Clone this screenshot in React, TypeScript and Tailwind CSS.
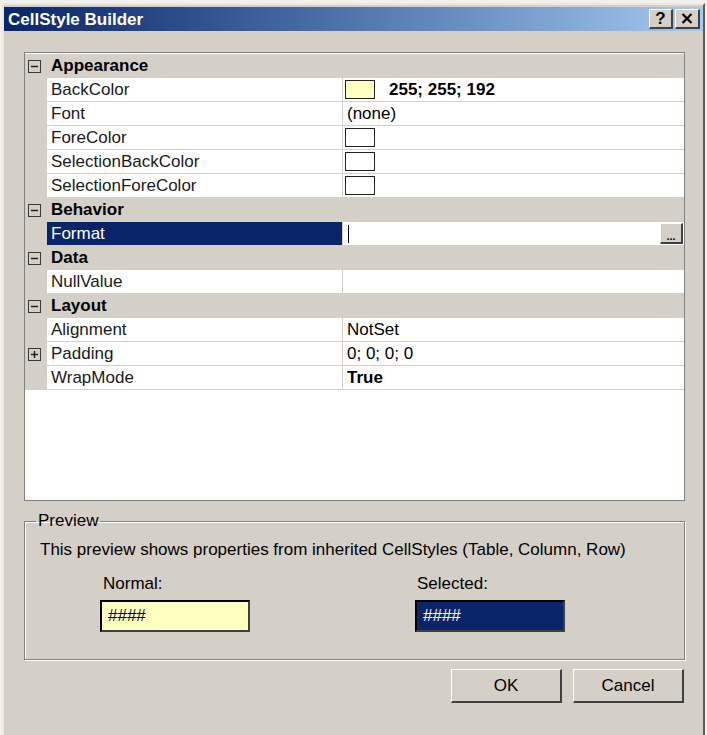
import React from "react";

type Prop = {
  name: string;
  value?: React.ReactNode;
  expand?: boolean;
  selected?: boolean;
};

type Category = { title: string; props: Prop[] };

function Glyph({ plus }: { plus?: boolean }) {
  return (
    <svg width="13" height="13" viewBox="0 0 13 13" className="block">
      <rect x="0.5" y="0.5" width="12" height="12" fill="none" stroke="#3a3a3a" />
      <line x1="3" y1="6.5" x2="10" y2="6.5" stroke="#1a1a1a" strokeWidth="1.4" />
      {plus && <line x1="6.5" y1="3" x2="6.5" y2="10" stroke="#1a1a1a" strokeWidth="1.4" />}
    </svg>
  );
}

function Swatch({ color }: { color: string }) {
  return <div className={`w-[30px] h-[19px] border border-[#222] ${color}`} />;
}

const categories: Category[] = [
  {
    title: "Appearance",
    props: [
      {
        name: "BackColor",
        value: (
          <div className="flex items-center gap-[14px]">
            <Swatch color="bg-[#ffffc0]" />
            <span className="font-bold">255; 255; 192</span>
          </div>
        ),
      },
      { name: "Font", value: <span className="pl-[2px]">(none)</span> },
      { name: "ForeColor", value: <Swatch color="bg-white" /> },
      { name: "SelectionBackColor", value: <Swatch color="bg-white" /> },
      { name: "SelectionForeColor", value: <Swatch color="bg-white" /> },
    ],
  },
  {
    title: "Behavior",
    props: [{ name: "Format", selected: true }],
  },
  {
    title: "Data",
    props: [{ name: "NullValue" }],
  },
  {
    title: "Layout",
    props: [
      { name: "Alignment", value: <span className="pl-[2px]">NotSet</span> },
      { name: "Padding", expand: true, value: <span className="pl-[2px]">0; 0; 0; 0</span> },
      { name: "WrapMode", value: <span className="pl-[2px] font-bold">True</span> },
    ],
  },
];

function PropRow({ p }: { p: Prop }) {
  return (
    <div className="flex h-[24px]">
      <div className="w-[22px] shrink-0 bg-[#d4d0c8] flex items-center pl-[3px]">
        {p.expand && <Glyph plus />}
      </div>
      <div
        className={`w-[296px] shrink-0 border-r border-b border-[#d4d0c8] pl-[4px] flex items-center ${
          p.selected ? "bg-[#0a246a] text-white" : "bg-white text-[#1a1a1a]"
        }`}
      >
        {p.name}
      </div>
      <div className="flex-1 border-b border-[#d4d0c8] pl-[2px] flex items-center">
        {p.selected ? (
          <div className="flex items-center w-full h-full">
            <div className="ml-[3px] w-[1px] h-[18px] bg-black" />
            <div className="ml-auto mr-[1px] w-[23px] h-[21px] bg-[#d4d0c8] border-t border-l border-white border-r-2 border-b-2 border-r-[#404040] border-b-[#404040] flex items-end justify-center pb-[1px]">
              <span className="text-[11px] leading-[10px] font-bold">...</span>
            </div>
          </div>
        ) : (
          p.value
        )}
      </div>
    </div>
  );
}

function Button({ label }: { label: string }) {
  return (
    <div className="w-[111px] h-[34px] bg-[#d4d0c8] border-t border-l border-white border-r-2 border-b-2 border-r-[#404040] border-b-[#404040] flex items-center justify-center text-black">
      {label}
    </div>
  );
}

export default function App() {
  return (
    <div className="w-[707px] h-[735px] overflow-hidden bg-[#f2f1ec] pl-[2px] pt-[3px] font-['Liberation_Sans',Arial,sans-serif] text-[17px] text-black">
      <div className="w-[703px] h-[740px] bg-[#d4d0c8] border-l-2 border-t-2 border-l-[#ebe8e2] border-t-[#ebe8e2] border-r-2 border-r-[#5c5c5c] pt-[2px]">
        {/* title bar */}
        <div className="h-[24px] flex items-center bg-gradient-to-r from-[#0a246a] to-[#a6caf0] pl-[4px] pr-[3px]">
          <span className="font-bold text-white leading-none">CellStyle Builder</span>
          <div className="ml-auto flex gap-[2px]">
            <div className="w-[24px] h-[20px] bg-[#d4d0c8] border-t border-l border-white border-r-2 border-b-2 border-r-[#404040] border-b-[#404040] flex items-center justify-center">
              <span className="font-bold text-[17px] leading-none">?</span>
            </div>
            <div className="w-[25px] h-[20px] bg-[#d4d0c8] border-t border-l border-white border-r-2 border-b-2 border-r-[#404040] border-b-[#404040] flex items-center justify-center">
              <svg width="12" height="11" viewBox="0 0 12 11">
                <path d="M1.5 1 L10.5 10 M10.5 1 L1.5 10" stroke="#000" strokeWidth="2.2" />
              </svg>
            </div>
          </div>
        </div>

        <div className="pl-[20px]">
          {/* property grid */}
          <div className="mt-[21px] w-[661px] h-[449px] border border-[#808080] bg-white pt-[1px]">
            {categories.map((c) => (
              <div key={c.title}>
                <div className="flex h-[24px] items-center bg-[#d4d0c8]">
                  <div className="w-[22px] pl-[3px]">
                    <Glyph />
                  </div>
                  <div className="pl-[4px] font-bold">{c.title}</div>
                </div>
                {c.props.map((p) => (
                  <PropRow key={p.name} p={p} />
                ))}
              </div>
            ))}
          </div>

          {/* preview */}
          <fieldset className="mt-[10px] w-[661px] border border-[#808080] shadow-[1px_1px_0_#ffffff,inset_1px_1px_0_#ffffff] pl-[15px] pb-[27px]">
            <legend className="-ml-[4px] px-[2px] leading-[20px]">Preview</legend>
            <div className="mt-[9px] leading-[20px]">
              This preview shows properties from inherited CellStyles (Table, Column, Row)
            </div>
            <div className="mt-[14px] flex pl-[60px] gap-[165px]">
              <div className="w-[150px]">
                <div className="pl-[3px] leading-[20px]">Normal:</div>
                <div className="mt-[6px] h-[32px] bg-[#ffffc0] border-2 border-t-black border-l-black border-r-[#404040] border-b-[#404040] flex items-center pl-[6px]">
                  ####
                </div>
              </div>
              <div className="w-[150px]">
                <div className="pl-[2px] leading-[20px]">Selected:</div>
                <div className="mt-[6px] h-[32px] bg-[#0a246a] text-white border-2 border-t-black border-l-black border-r-[#404040] border-b-[#404040] flex items-center pl-[6px]">
                  ####
                </div>
              </div>
            </div>
          </fieldset>

          {/* buttons */}
          <div className="w-[661px] mt-[9px] flex justify-end gap-[11px] pr-[1px]">
            <Button label="OK" />
            <Button label="Cancel" />
          </div>
        </div>
      </div>
    </div>
  );
}
